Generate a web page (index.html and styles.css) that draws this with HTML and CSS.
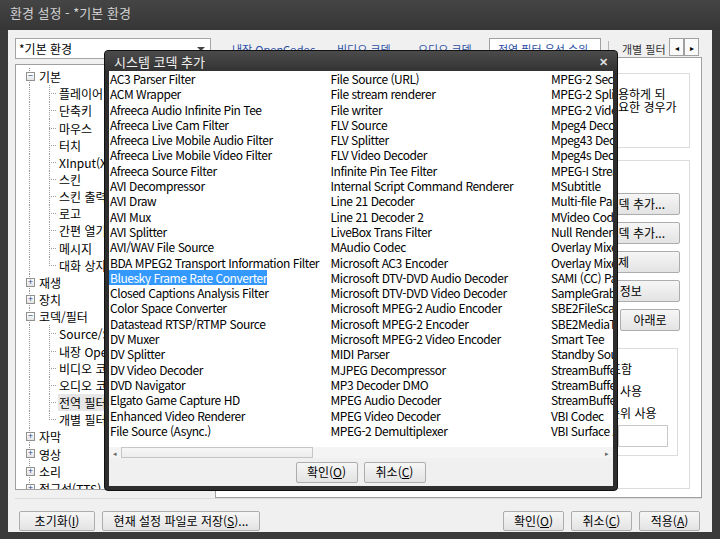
FILE: index.html
```html
<!DOCTYPE html>
<html lang="ko">
<head>
<meta charset="utf-8">
<title>환경 설정</title>
<link rel="stylesheet" href="styles.css">
</head>
<body>
<div class="window">
  <div class="titlebar">환경 설정 - *기본 환경</div>
  <div class="client">

    <div class="toprow">
      <div class="combo"><span>*기본 환경</span><i class="arrow"></i></div>
      <div class="tabs">
        <span class="tab t1">내장 OpenCodec</span>
        <span class="tab t2">비디오 코덱</span>
        <span class="tab t3">오디오 코덱</span>
        <span class="tab on">전역 필터 우선 순위</span>
        <span class="tab-sep"></span>
        <span class="tab plain">개별 필터</span>
        <span class="spin"><b>&#9666;</b><b>&#9656;</b></span>
      </div>
    </div>

    <div class="main">
      <!-- 트리 -->
      <div class="tree">
        <div class="node root"><i class="exp">&minus;</i>기본</div>
        <div class="node leaf">플레이어</div>
        <div class="node leaf">단축키</div>
        <div class="node leaf">마우스</div>
        <div class="node leaf">터치</div>
        <div class="node leaf">XInput(Xbox 컨트롤러)</div>
        <div class="node leaf">스킨</div>
        <div class="node leaf">스킨 출력</div>
        <div class="node leaf">로고</div>
        <div class="node leaf">간편 열기</div>
        <div class="node leaf">메시지</div>
        <div class="node leaf last">대화 상자</div>
        <div class="node root"><i class="exp">+</i>재생</div>
        <div class="node root"><i class="exp">+</i>장치</div>
        <div class="node root"><i class="exp">&minus;</i>코덱/필터</div>
        <div class="node leaf">Source/Splitter</div>
        <div class="node leaf">내장 OpenCodec</div>
        <div class="node leaf">비디오 코덱</div>
        <div class="node leaf">오디오 코덱</div>
        <div class="node leaf"><span class="sel">전역 필터 우선 순위</span></div>
        <div class="node leaf last">개별 필터</div>
        <div class="node root"><i class="exp">+</i>자막</div>
        <div class="node root"><i class="exp">+</i>영상</div>
        <div class="node root"><i class="exp">+</i>소리</div>
        <div class="node root"><i class="exp">+</i>접근성(TTS)</div>
      </div>

      <!-- 탭 페이지 -->
      <div class="page">
        <div class="group desc">
          <p><span class="pre">전역 필터 목록의 필터를 우선 사</span>용하게 되</p>
          <p><span class="pre">므로 순서의 변경 또는 추가가 필</span>요한 경우가</p>
        </div>
        <div class="group tools">
          <div class="btns">
            <button>시스템 코덱 추가...</button>
            <button>사용자 코덱 추가...</button>
            <button>삭제</button>
            <button>필터 정보</button>
            <div class="pair"><button>위로</button><button>아래로</button></div>
          </div>
          <div class="group opts">
            <p><span class="pre o1">하위 필터 포</span>함</p>
            <p><span class="pre">우선 순위&nbsp;</span>사용</p>
            <p><span class="pre">병합 우선 순</span>위 사용</p>
            <div class="edit"></div>
          </div>
        </div>
      </div>
    </div>

    <div class="footer">
      <button class="w76">초기화(<u>I</u>)</button>
      <button class="w158">현재 설정 파일로 저장(<u>S</u>)...</button>
      <span class="grow"></span>
      <button class="w61">확인(<u>O</u>)</button>
      <button class="w61">취소(<u>C</u>)</button>
      <button class="w61">적용(<u>A</u>)</button>
    </div>
  </div>

  <!-- 시스템 코덱 추가 -->
  <div class="dialog">
    <div class="dlg-title"><span>시스템 코덱 추가</span><b class="close">&#10005;</b></div>
    <div class="dlg-body">
      <div class="list" id="list"></div>
      <div class="hscroll"><i class="arr">&#9666;</i><i class="thumb"></i><span class="grow"></span><i class="arr">&#9656;</i></div>
      <div class="dlg-btns">
        <button>확인(<u>O</u>)</button>
        <button>취소(<u>C</u>)</button>
      </div>
    </div>
  </div>
</div>

<script>
const filters = [
'AC3 Parser Filter','ACM Wrapper','Afreeca Audio Infinite Pin Tee','Afreeca Live Cam Filter',
'Afreeca Live Mobile Audio Filter','Afreeca Live Mobile Video Filter','Afreeca Source Filter',
'AVI Decompressor','AVI Draw','AVI Mux','AVI Splitter','AVI/WAV File Source',
'BDA MPEG2 Transport Information Filter','Bluesky Frame Rate Converter',
'Closed Captions Analysis Filter','Color Space Converter','Datastead RTSP/RTMP Source',
'DV Muxer','DV Splitter','DV Video Decoder','DVD Navigator','Elgato Game Capture HD',
'Enhanced Video Renderer','File Source (Async.)',
'File Source (URL)','File stream renderer','File writer','FLV Source','FLV Splitter',
'FLV Video Decoder','Infinite Pin Tee Filter','Internal Script Command Renderer',
'Line 21 Decoder','Line 21 Decoder 2','LiveBox Trans Filter','MAudio Codec',
'Microsoft AC3 Encoder','Microsoft DTV-DVD Audio Decoder','Microsoft DTV-DVD Video Decoder',
'Microsoft MPEG-2 Audio Encoder','Microsoft MPEG-2 Encoder','Microsoft MPEG-2 Video Encoder',
'MIDI Parser','MJPEG Decompressor','MP3 Decoder DMO','MPEG Audio Decoder',
'MPEG Video Decoder','MPEG-2 Demultiplexer',
'MPEG-2 Sections and Tables','MPEG-2 Splitter','MPEG-2 Video Stream Analyzer',
'Mpeg4 Decoder DMO','Mpeg43 Decoder DMO','Mpeg4s Decoder DMO','MPEG-I Stream Splitter',
'MSubtitle','Multi-file Parser','MVideo Codec','Null Renderer','Overlay Mixer',
'Overlay Mixer2','SAMI (CC) Parser','SampleGrabber','SBE2FileScan','SBE2MediaTypeProfile',
'Smart Tee','Standby Source','StreamBufferSink','StreamBufferSource','StreamBufferSink2',
'VBI Codec','VBI Surface Allocator'
];

// 목록 채우기
const list = document.getElementById('list');
filters.forEach(name => {
  const item = document.createElement('span');
  item.textContent = name;
  if (name === 'Bluesky Frame Rate Converter') item.className = 'picked';
  list.appendChild(item);
});
</script>
</body>
</html>
```

FILE: styles.css
```css
* {
  box-sizing: border-box;
}
body {
  margin: 0;
  font-family: "Noto Sans CJK KR", "Noto Sans", sans-serif;
  font-size: 12px;
  color: #000;
  background: #383838;
}
p {
  margin: 0;
}
button {
  font-family: inherit;
  font-size: 12px;
  color: #000;
  height: 20px;
  padding: 0 8px;
  border: 1px solid #adadad;
  border-radius: 2px;
  background: linear-gradient(#f6f6f6, #e3e3e3);
  line-height: 16px;
  white-space: nowrap;
}

.window {
  position: relative;
  width: 720px;
  height: 539px;
  background: #3a3a3a;
  padding: 0 8px 7px 8px;
  display: flex;
  flex-direction: column;
  overflow: hidden;
}
.titlebar {
  height: 30px;
  line-height: 25px;
  color: #d2d2d2;
  font-size: 13px;
  background: linear-gradient(#454545, #363636);
  margin: 0 -8px;
  padding-left: 10px;
}
.client {
  flex: 1;
  background: #f0f0f0;
  display: flex;
  flex-direction: column;
  padding: 8px 10px 0 7px;
}

/* 위쪽 줄 */
.toprow {
  display: flex;
  height: 19px;
}
.combo {
  width: 196px;
  height: 21px;
  border: 1px solid #a5a5a5;
  background: #fff;
  display: flex;
  align-items: center;
  padding-left: 3px;
}
.combo span {
  flex: 1;
}
.arrow {
  width: 0;
  height: 0;
  border: 4px solid transparent;
  border-top: 4px solid #444;
  margin: 4px 5px 0 0;
}
.tabs {
  display: flex;
  align-items: flex-start;
  margin-left: 21px;
  flex: 1;
  font-size: 11px;
}
.tab {
  color: #2c4fa6;
  padding-top: 3px;
  white-space: nowrap;
  overflow: hidden;
}
.t1 { width: 105px; }
.t2 { width: 81px; }
.t3 { width: 71px; }
.tab.on {
  width: 112px;
  height: 20px;
  background: #fff;
  border: 1px solid #a0a0a0;
  border-bottom: none;
  padding: 2px 0 0 8px;
}
.tab-sep {
  width: 1px;
  height: 13px;
  margin: 3px 13px 0 7px;
  background: #b5b5b5;
}
.tab.plain {
  color: #333;
  width: 47px;
}
.spin {
  display: flex;
}
.spin b {
  width: 15px;
  height: 18px;
  border: 1px solid #a0a0a0;
  background: #fafafa;
  font-size: 8px;
  font-weight: normal;
  display: flex;
  align-items: center;
  justify-content: center;
}

/* 가운데 */
.main {
  display: flex;
  gap: 4px;
  height: 441px;
}
.tree {
  width: 196px;
  margin-top: 7px;
  height: 426px;
  background: #fff;
  border: 1px solid #a0a0a0;
  padding-top: 3px;
  overflow: hidden;
}
.node {
  position: relative;
  height: 17.17px;
  display: flex;
  align-items: center;
  white-space: nowrap;
  padding-left: 23px;
  background: repeating-linear-gradient(#9a9a9a 0 1px, transparent 1px 2px) no-repeat 13px 0 / 1px 100%;
}
.node.leaf {
  padding-left: 43px;
}
.node.leaf::after {
  content: "";
  position: absolute;
  left: 33px;
  top: 0;
  width: 8px;
  height: 100%;
  background:
    repeating-linear-gradient(#9a9a9a 0 1px, transparent 1px 2px) no-repeat 0 0 / 1px 100%,
    repeating-linear-gradient(90deg, #9a9a9a 0 1px, transparent 1px 2px) no-repeat 0 50% / 100% 1px;
}
.node.leaf.last::after {
  background:
    repeating-linear-gradient(#9a9a9a 0 1px, transparent 1px 2px) no-repeat 0 0 / 1px 50%,
    repeating-linear-gradient(90deg, #9a9a9a 0 1px, transparent 1px 2px) no-repeat 0 50% / 100% 1px;
}
.exp {
  position: absolute;
  left: 10px;
  top: 4px;
  width: 9px;
  height: 9px;
  border: 1px solid #919191;
  background: linear-gradient(#fff, #e4e4e4);
  font-style: normal;
  font-size: 9px;
  line-height: 6px;
  text-align: center;
  color: #2a4a8a;
}
.sel {
  background: #e6e6e6;
  padding: 0 1px;
  margin-left: -1px;
}

.page {
  flex: 1;
  background: #fff;
  border: 1px solid #a0a0a0;
  padding: 15px 11px 8px 11px;
  display: flex;
  flex-direction: column;
  gap: 12px;
}
.group {
  border: 1px solid #dcdcdc;
}
.pre {
  display: inline-block;
  overflow: hidden;
  text-align: right;
  vertical-align: top;
  white-space: nowrap;
}
.desc {
  height: 75px;
  padding: 14px 0 0 0;
  line-height: 12.5px;
  white-space: nowrap;
}
.desc .pre {
  width: 390px;
}
.tools {
  flex: 1;
  padding: 32px 9px 0 0;
  display: flex;
  flex-direction: column;
  align-items: flex-end;
}
.btns {
  display: flex;
  flex-direction: column;
  gap: 7px;
  width: 124px;
}
.btns button {
  height: 22px;
}
.pair {
  display: flex;
  gap: 4px;
}
.pair button {
  flex: 1;
  height: 22px;
}
.opts {
  margin-top: 17px;
  width: 200px;
  height: 108px;
  margin-right: 2px;
  padding: 9px 0 0 0;
  line-height: 22px;
  white-space: nowrap;
}
.opts .pre {
  width: 141px;
}
.opts .o1 {
  width: 142px;
}
.edit {
  width: 50px;
  height: 22px;
  border: 1px solid #c8c8c8;
  margin: 1px 0 0 139px;
}

/* 아래 버튼 */
.footer {
  display: flex;
  align-items: flex-start;
  gap: 7px;
  flex: 1;
  padding: 12px 2px 0 4px;
  border-top: 1px solid #dcdcdc;
}
.footer button {
  height: 20px;
  padding: 0;
}
.w76 { width: 76px; }
.w158 { width: 158px; }
.w61 { width: 61px; }
.grow {
  flex: 1;
}

/* 대화 상자 */
.dialog {
  position: absolute;
  left: 104px;
  top: 50px;
  width: 514px;
  height: 441px;
  background: #2e2e2e;
  border: 1px solid #111;
  border-radius: 4px;
  padding: 0 4px 4px 4px;
  display: flex;
  flex-direction: column;
}
.dlg-title {
  height: 20px;
  display: flex;
  align-items: center;
  padding-left: 9px;
  color: #f0f0f0;
  font-size: 13px;
  background: linear-gradient(#4b4b4b, #333);
  margin: 0 -4px;
  padding-right: 9px;
  border-radius: 3px 3px 0 0;
}
.dlg-title span {
  flex: 1;
}
.close {
  font-size: 11px;
  color: #ddd;
}
.dlg-body {
  flex: 1;
  background: #f0f0f0;
  display: flex;
  flex-direction: column;
}
.list {
  background: #fff;
  height: 375px;
  padding: 0;
  display: grid;
  grid-auto-flow: column;
  grid-template-rows: repeat(24, 15.3px);
  grid-auto-columns: 220.5px;
  overflow: hidden;
  white-space: nowrap;
  letter-spacing: -0.45px;
}
.list span {
  padding-left: 1px;
  line-height: 15px;
  justify-self: start;
}
.list .picked {
  background: #3399ff;
  color: #fff;
}
.hscroll {
  height: 12px;
  background: #f4f4f4;
  display: flex;
  border-top: 1px solid #fff;
}
.hscroll .arr {
  width: 12px;
  font-size: 7px;
  font-style: normal;
  color: #666;
  display: flex;
  align-items: center;
  justify-content: center;
}
.thumb {
  width: 192px;
  border: 1px solid #c5c5c5;
  background: linear-gradient(#f7f7f7, #ececec);
}
.dlg-btns {
  flex: 1;
  display: flex;
  justify-content: center;
  align-items: center;
  gap: 6px;
  padding-right: 1px;
}
.dlg-btns button {
  width: 62px;
  height: 21px;
  padding: 0;
}
```
